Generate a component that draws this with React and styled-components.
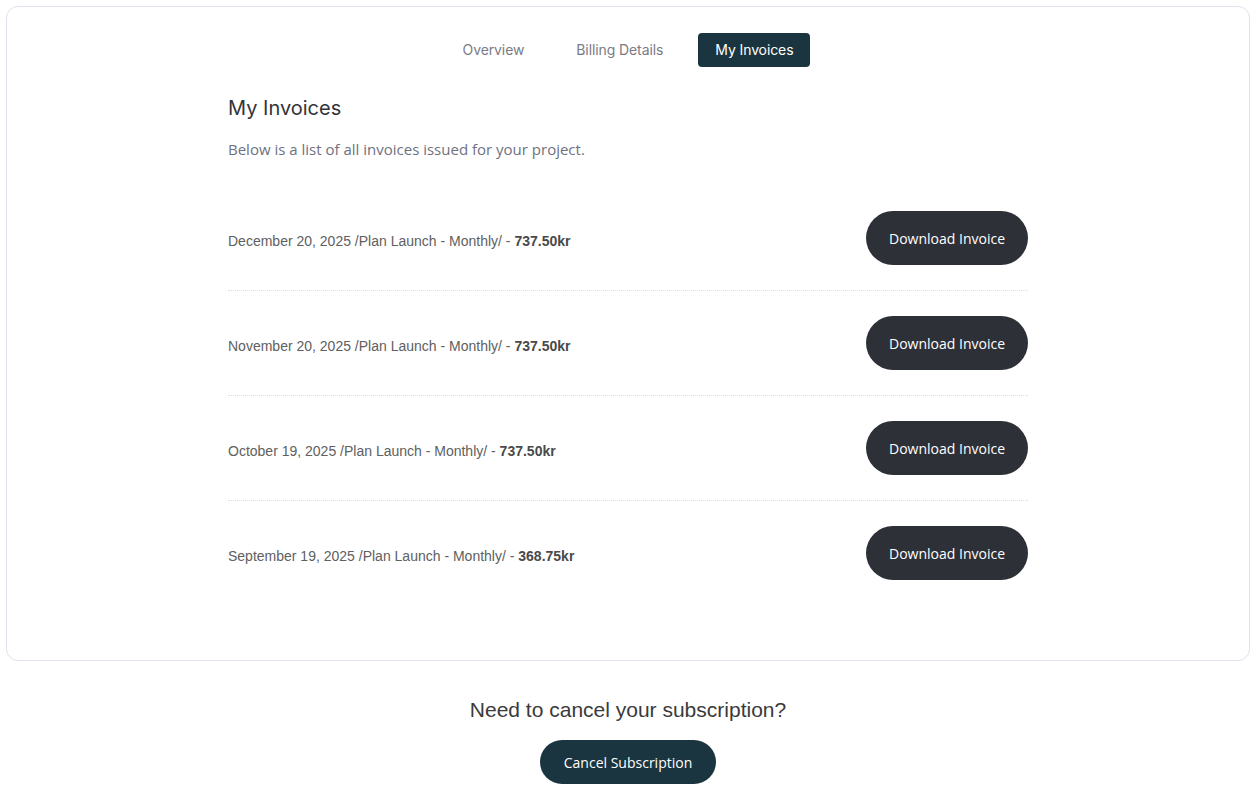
import React from "react"
import styled, { createGlobalStyle } from "styled-components"

const GlobalStyle = createGlobalStyle`
  html, body {
    margin: 0;
    padding: 0;
    background: #ffffff;
  }
  body {
    font-family: "Liberation Sans", Arial, sans-serif;
  }
  * {
    box-sizing: border-box;
  }
`

const Page = styled.div`
  padding: 6px;
`

const Card = styled.section`
  border: 1px solid #e2e1ec;
  border-radius: 12px;
  padding: 26px 20px 55px;
`

const Tabs = styled.nav`
  display: flex;
  justify-content: center;
  gap: 18px;
  margin-bottom: 29px;
`

const Tab = styled.button`
  height: 34px;
  padding: 0 17px;
  border: none;
  border-radius: 4px;
  font-family: Inter, "Liberation Sans", sans-serif;
  font-size: 14px;
  line-height: 32px;
  letter-spacing: -0.1px;
  cursor: pointer;
  background: ${p => (p.$active ? "#1b3540" : "transparent")};
  color: ${p => (p.$active ? "#ffffff" : "#7b7b85")};
`

const Content = styled.div`
  max-width: 800px;
  margin: 0 auto;
`

const Title = styled.h2`
  margin: 0 0 18px;
  font-family: Inter, "Liberation Sans", sans-serif;
  font-size: 20px;
  line-height: 24px;
  font-weight: 400;
  color: #333338;
`

const Lead = styled.p`
  margin: 0 0 26px;
  font-family: "Open Sans", "Noto Sans", sans-serif;
  font-size: 15px;
  line-height: 22px;
  color: #6f7180;
`

const List = styled.ul`
  list-style: none;
  margin: 0;
  padding: 0;
`

const Row = styled.li`
  display: flex;
  align-items: center;
  justify-content: space-between;
  padding: 25px 0;
  border-bottom: ${p => (p.$last ? "none" : "1px dotted #dcdcdc")};
`

const RowText = styled.span`
  font-size: 14px;
  color: #606060;
  padding-top: 6px;

  & > b {
    color: #4a4a4a;
  }
`

const PillButton = styled.button`
  height: ${p => p.$height}px;
  padding: 0 ${p => p.$pad}px;
  border: none;
  border-radius: 999px;
  background: ${p => p.$bg};
  color: #ffffff;
  font-family: "Open Sans", "Noto Sans", sans-serif;
  font-size: 14px;
  cursor: pointer;
`

const Footer = styled.div`
  display: flex;
  flex-direction: column;
  align-items: center;
  margin-top: 37px;
`

const FooterTitle = styled.h3`
  margin: 0 0 18px;
  font-size: 21px;
  line-height: 24px;
  font-weight: 400;
  color: #3a3a3a;
`

const invoices = [
  { date: "December 20, 2025", amount: "737.50kr" },
  { date: "November 20, 2025", amount: "737.50kr" },
  { date: "October 19, 2025", amount: "737.50kr" },
  { date: "September 19, 2025", amount: "368.75kr" },
]

export default function App() {
  return (
    <Page>
      <GlobalStyle />
      <Card>
        <Tabs>
          <Tab>Overview</Tab>
          <Tab>Billing Details</Tab>
          <Tab $active>My Invoices</Tab>
        </Tabs>
        <Content>
          <Title>My Invoices</Title>
          <Lead>Below is a list of all invoices issued for your project.</Lead>
          <List>
            {invoices.map((inv, i) => (
              <Row key={inv.date} $last={i === invoices.length - 1}>
                <RowText>
                  {inv.date} /Plan Launch - Monthly/ - <b>{inv.amount}</b>
                </RowText>
                <PillButton $height={54} $pad={23} $bg="#2e3038">
                  Download Invoice
                </PillButton>
              </Row>
            ))}
          </List>
        </Content>
      </Card>
      <Footer>
        <FooterTitle>Need to cancel your subscription?</FooterTitle>
        <PillButton $height={44} $pad={24} $bg="#1b3540">
          Cancel Subscription
        </PillButton>
      </Footer>
    </Page>
  )
}
